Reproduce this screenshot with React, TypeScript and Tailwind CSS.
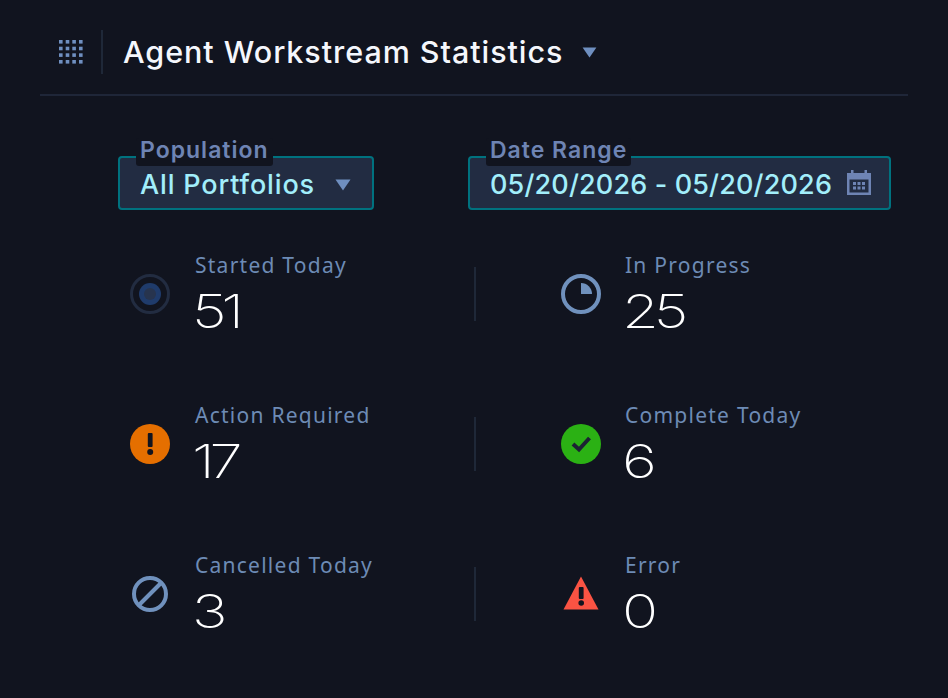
import React from "react";

const Caret = ({ className }: { className: string }) => (
  <svg className={className} viewBox="0 0 16 12" fill="#6f8fc0">
    <path d="M0.5 0.5h15L8 11.5z" />
  </svg>
);

const GridIcon = () => (
  <svg className="w-[26px] h-[26px]" viewBox="0 0 26 26" fill="#6f8fc0">
    {[1, 7.7, 14.3, 21].map((y) =>
      [1, 7.7, 14.3, 21].map((x) => <rect key={`${x}-${y}`} x={x} y={y} width="3.6" height="3.6" />)
    )}
  </svg>
);

const CalendarIcon = () => (
  <svg className="w-[26px] h-[26px]" viewBox="0 0 26 26" fill="#6e84b4">
    <path
      fillRule="evenodd"
      d="M1 4h4V1h2.5v3h11V1H21v3h4v22H1zM3.5 10.5v13h19v-13z"
    />
    <rect x="7" y="13" width="3" height="3" />
    <rect x="11.5" y="13" width="3" height="3" />
    <rect x="16" y="13" width="3" height="3" />
    <rect x="7" y="17.5" width="3" height="3" />
    <rect x="11.5" y="17.5" width="3" height="3" />
    <rect x="16" y="17.5" width="3" height="3" />
  </svg>
);

const Started = () => (
  <svg className="w-10 h-10" viewBox="0 0 40 40">
    <circle cx="20" cy="20" r="18.5" fill="none" stroke="#222c41" strokeWidth="3" />
    <circle cx="20" cy="20" r="11" fill="#1f3b6b" />
    <circle cx="20" cy="20" r="6" fill="#27344e" />
  </svg>
);
const Progress = () => (
  <svg className="w-10 h-10" viewBox="0 0 40 40">
    <circle cx="20" cy="20" r="18" fill="none" stroke="#7091bd" strokeWidth="4" />
    <path d="M20 9a11 11 0 0 1 11 11H20z" fill="#7091bd" />
  </svg>
);
const Action = () => (
  <svg className="w-10 h-10" viewBox="0 0 40 40">
    <circle cx="20" cy="20" r="20" fill="#e56f00" />
    <rect x="17.8" y="9" width="4.8" height="14" rx="1" fill="#11141f" />
    <circle cx="20.2" cy="28" r="3" fill="#11141f" />
  </svg>
);
const Complete = () => (
  <svg className="w-10 h-10" viewBox="0 0 40 40">
    <circle cx="20" cy="20" r="20" fill="#2bb114" />
    <path d="M12 20l6 5.5L28.500 14" fill="none" stroke="#1c2233" strokeWidth="4" />
  </svg>
);
const Cancelled = () => (
  <svg className="w-10 h-10" viewBox="0 0 40 40">
    <circle cx="20" cy="20" r="16" fill="none" stroke="#7091bd" strokeWidth="4" />
    <path d="M9 31L31 9" stroke="#7091bd" strokeWidth="4" />
  </svg>
);
const ErrorIcon = () => (
  <svg className="w-10 h-10" viewBox="0 0 40 40">
    <path d="M20 2.500L37.500 35.500H2.500z" fill="#fa5343" />
    <rect x="17.8" y="13" width="4.800" height="12" rx="1" fill="#11141f" />
    <circle cx="20.200" cy="29" r="2.800" fill="#11141f" />
  </svg>
);

const Stat = ({
  icon,
  label,
  value,
  right,
}: {
  icon: React.ReactNode;
  label: string;
  value: string;
  right?: boolean;
}) => (
  <div className={right ? "flex items-center ml-[85px]" : "flex items-center"}>
    <div className="w-10 h-10 shrink-0 mt-[-1px]">{icon}</div>
    <div className={right ? "ml-[24px] flex flex-col" : "ml-[25px] flex flex-col"}>
      <div className="text-[21px] leading-[28px] tracking-[1.25px] text-[#6d8bb5] font-['Noto_Sans',sans-serif] mt-[-3px]">
        {label}
      </div>
      <div className="mt-[8px] ml-[-3px] text-[46px] leading-[48px] font-extralight tracking-[-4px] text-white font-['Inter',sans-serif] origin-left scale-x-[1.3]">
        {value}
      </div>
    </div>
  </div>
);

const Divider = () => <div className="w-[2px] h-[54px] bg-[#1f2838]" />;

const Field = ({
  label,
  width,
  children,
}: {
  label: string;
  width: string;
  children: React.ReactNode;
}) => (
  <div
    className={`relative h-[54px] ${width} rounded-[4px] border-2 border-[#00727f] bg-[#222c42] flex items-center pl-[20px] pt-[4px]`}
  >
    <div className="absolute left-[16px] top-[-20px] px-[4px] h-[28px] rounded-[3px] bg-[#11141f] text-[#6e84b4] text-[23px] leading-[25px] font-semibold tracking-[1px] font-['Inter',sans-serif]">
      {label}
    </div>
    {children}
  </div>
);

export default function App() {
  return (
    <div className="w-[948px] h-[698px] bg-[#11141f] px-[40px] overflow-hidden font-['Inter',sans-serif]">
      <header className="h-[96px] border-b-2 border-[#1f2638] flex items-center pl-[18px] pt-[10px]">
        <GridIcon />
        <div className="w-[2px] h-[44px] bg-[#1f2838] ml-[17px]" />
        <h1 className="ml-[20px] text-[30.5px] leading-[40px] font-medium tracking-[0.95px] text-[#f5f7fc]">
          Agent Workstream Statistics
        </h1>
        <Caret className="ml-[19px] w-[15px] h-[11px]" />
      </header>

      <div className="mt-[60px] ml-[78px] flex gap-[94px]">
        <Field label="Population" width="w-[256px]">
          <span className="text-[27px] leading-[36px] font-medium tracking-[0.85px] text-[#a2eefb]">All Portfolios</span>
          <Caret className="ml-[20px] w-[16px] h-[12px]" />
        </Field>
        <Field label="Date Range" width="w-[423px]">
          <span className="text-[27px] leading-[36px] font-medium tracking-[0.15px] text-[#a2eefb]">
            05/20/2026 - 05/20/2026
          </span>
          <span className="ml-[14px] mb-[6px]">
            <CalendarIcon />
          </span>
        </Field>
      </div>

      <div className="mt-[44px] ml-[90px] grid grid-cols-[344px_2px_auto] auto-rows-[150px] items-start">
        <Stat icon={<Started />} label="Started Today" value="51" />
        <div className="pt-[13px]"><Divider /></div>
        <Stat right icon={<Progress />} label="In Progress" value="25" />
        <Stat icon={<Action />} label="Action Required" value="17" />
        <div className="pt-[13px]"><Divider /></div>
        <Stat right icon={<Complete />} label="Complete Today" value="6" />
        <Stat icon={<Cancelled />} label="Cancelled Today" value="3" />
        <div className="pt-[13px]"><Divider /></div>
        <Stat right icon={<ErrorIcon />} label="Error" value="0" />
      </div>
    </div>
  );
}
